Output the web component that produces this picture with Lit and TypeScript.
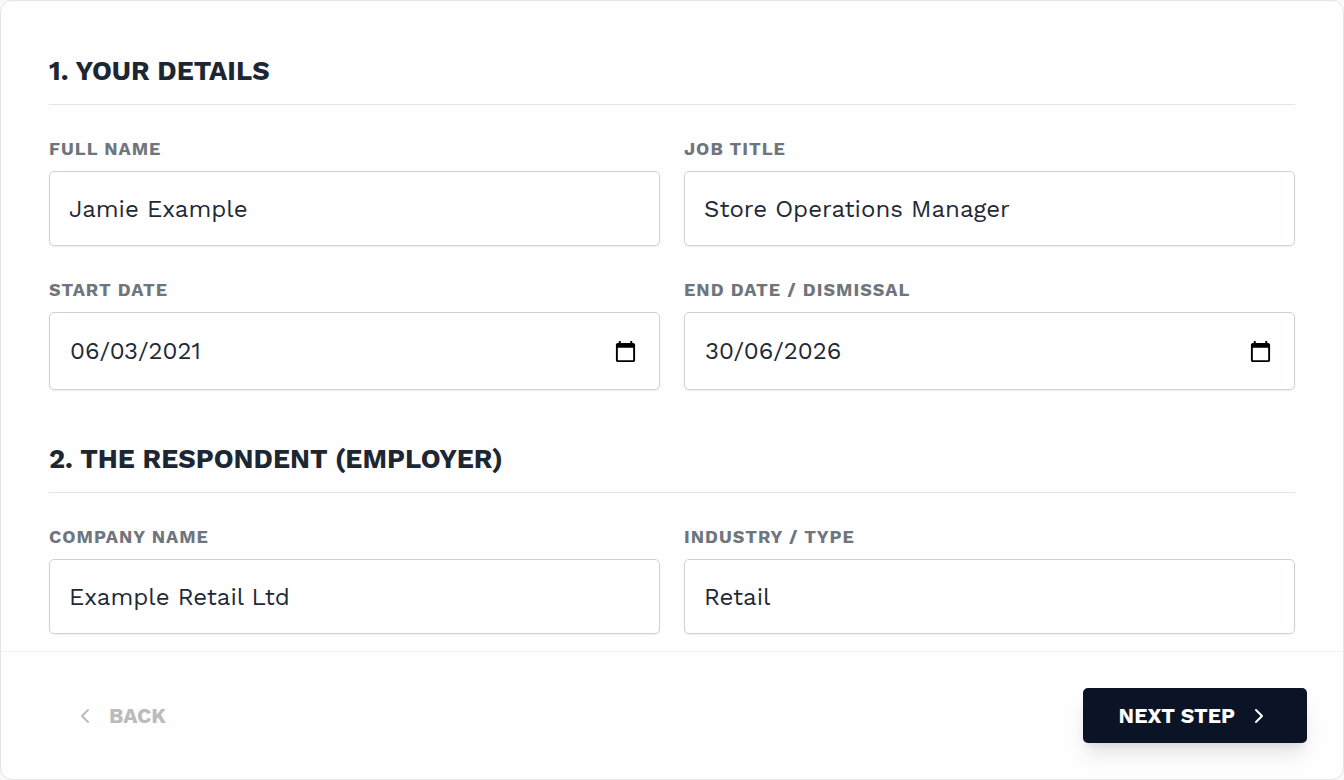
import { LitElement, html, svg, css, nothing } from "lit";
import { customElement, property } from "lit/decorators.js";

interface Field {
  id: string;
  label: string;
  value: string;
  date?: boolean;
}

interface Section {
  title: string;
  fields: Field[];
}

const SECTIONS: Section[] = [
  {
    title: "1. Your Details",
    fields: [
      { id: "full-name", label: "Full Name", value: "Jamie Example" },
      { id: "job-title", label: "Job Title", value: "Store Operations Manager" },
      { id: "start-date", label: "Start Date", value: "06/03/2021", date: true },
      { id: "end-date", label: "End Date / Dismissal", value: "30/06/2026", date: true },
    ],
  },
  {
    title: "2. The Respondent (Employer)",
    fields: [
      { id: "company", label: "Company Name", value: "Example Retail Ltd" },
      { id: "industry", label: "Industry / Type", value: "Retail" },
    ],
  },
];

const chevron = (d: string) => html`
  <svg width="24" height="24" viewBox="0 0 24 24" fill="none" stroke="currentColor"
    stroke-width="2" stroke-linecap="round" stroke-linejoin="round" aria-hidden="true">
    ${svg`<path d=${d}></path>`}
  </svg>`;

@customElement("form-field")
export class FormField extends LitElement {
  @property({ attribute: false }) field!: Field;

  static styles = css`
    :host {
      display: block;
      min-width: 0;
    }
    .label {
      display: block;
      margin-bottom: 10px;
      font-size: 18px;
      line-height: 24px;
      font-weight: 700;
      letter-spacing: 1px;
      text-transform: uppercase;
      color: #6e757c;
    }
    .box {
      display: flex;
      align-items: center;
      box-sizing: border-box;
      height: 75px;
      padding: 0 19px;
      border: 1px solid #ced2d6;
      border-radius: 5px;
      background: #fff;
      box-shadow: 0 1px 2px rgba(0, 0, 0, 0.06);
    }
    .box.date {
      height: 78px;
      padding: 0 20px;
    }
    .input {
      flex: 1;
      min-width: 0;
      padding: 0;
      border: 0;
      outline: 0;
      background: transparent;
      font: inherit;
      font-size: 24px;
      line-height: 36px;
      color: #1f2a37;
    }
    .picker {
      display: flex;
      padding: 2px;
      border: 0;
      background: none;
      color: #000;
      cursor: pointer;
    }
  `;

  render() {
    const { id, label, value, date } = this.field;
    return html`
      <label class="label" for=${id}>${label}</label>
      <div class="box ${date ? "date" : ""}">
        <input class="input" id=${id} type="text" .value=${value} />
        ${date
          ? html`<button class="picker" type="button" aria-label="Open calendar">
              <svg width="23" height="23" viewBox="0 0 24 24" fill="currentColor" aria-hidden="true">
                <path fill-rule="evenodd" d="M20 3h-1V1h-2v2H7V1H5v2H4c-1.1 0-2 .9-2 2v16c0 1.1.9 2 2 2h16c1.1 0 2-.9 2-2V5c0-1.1-.9-2-2-2zm0 18H4V8h16v13z"></path>
              </svg>
            </button>`
          : nothing}
      </div>
    `;
  }
}

@customElement("app-root")
export class AppRoot extends LitElement {
  static styles = css`
    :host {
      display: block;
      background: #f8f9fa;
      font-family: "Work Sans", Inter, sans-serif;
    }
    .card {
      display: flex;
      flex-direction: column;
      box-sizing: border-box;
      height: 100vh;
      border: 1px solid #e3e5e7;
      border-radius: 12px;
      background: #fefefe;
      overflow: hidden;
    }
    .body {
      display: flex;
      flex-direction: column;
      flex: 1;
      gap: 48px;
      min-height: 0;
      padding: 49px 48px 16px;
      overflow: hidden auto;
      scrollbar-width: none;
    }
    .title {
      margin: 0 0 32px;
      padding-bottom: 12px;
      border-bottom: 1px solid #e3e5e8;
      font-size: 27px;
      line-height: 42px;
      font-weight: 700;
      text-transform: uppercase;
      color: #1c2733;
    }
    .grid {
      display: grid;
      grid-template-columns: repeat(2, minmax(0, 1fr));
      gap: 32px 24px;
    }
    .footer {
      display: flex;
      align-items: center;
      justify-content: space-between;
      padding: 36px;
      border-top: 1px solid #f1f3f4;
    }
    .btn {
      display: flex;
      align-items: center;
      gap: 12px;
      height: 55px;
      padding: 0 36px;
      border: 0;
      border-radius: 5px;
      font: inherit;
      font-size: 21px;
      font-weight: 700;
      text-transform: uppercase;
      cursor: pointer;
    }
    .back {
      background: none;
      color: #b9bbbc;
    }
    .next {
      background: #0b1426;
      color: #fff;
      box-shadow: 0 14px 20px -3px rgba(0, 0, 0, 0.1), 0 5px 8px -4px rgba(0, 0, 0, 0.1);
    }
  `;

  render() {
    return html`
      <form class="card" @submit=${(e: Event) => e.preventDefault()}>
        <div class="body">
          ${SECTIONS.map(
            (s) => html`
              <section>
                <h2 class="title">${s.title}</h2>
                <div class="grid">
                  ${s.fields.map((f) => html`<form-field .field=${f}></form-field>`)}
                </div>
              </section>
            `
          )}
        </div>
        <footer class="footer">
          <button class="btn back" type="button">${chevron("m15 18-6-6 6-6")}Back</button>
          <button class="btn next" type="submit">Next Step${chevron("m9 18 6-6-6-6")}</button>
        </footer>
      </form>
    `;
  }
}
